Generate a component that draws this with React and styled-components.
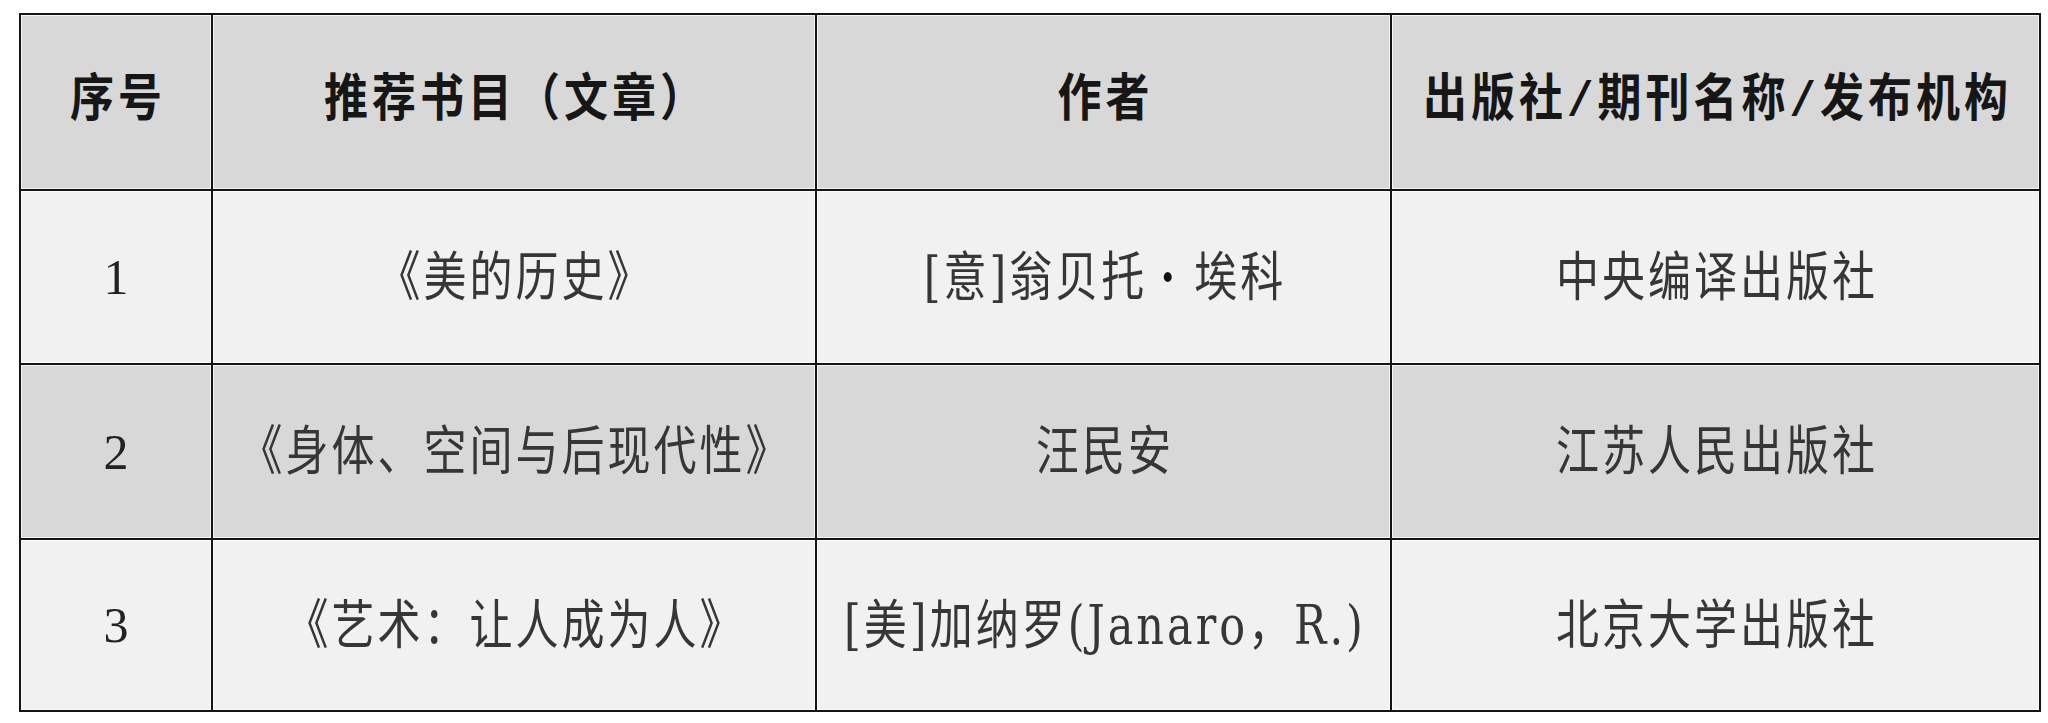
import React from "react";
import styled, { createGlobalStyle } from "styled-components";

const GlobalStyle = createGlobalStyle`
  html, body {
    margin: 0;
    padding: 0;
    background: #ffffff;
  }
  body {
    font-family: "Liberation Serif", "Noto Sans CJK SC", serif;
  }
`;

const Page = styled.div`
  padding: 13px 0 0 19px;
`;

const Table = styled.div`
  display: grid;
  grid-template-columns: 192px 604px 575px 649px;
  grid-template-rows: 176px 174px 175px 172px;
  width: max-content;
  border-left: 2px solid #141414;
  border-top: 2px solid #141414;
`;

const Cell = styled.div`
  display: flex;
  align-items: center;
  justify-content: center;
  overflow: hidden;
  border-right: 2px solid #141414;
  border-bottom: 2px solid #141414;
  background: ${(p) => (p.$shade ? "#d8d8d8" : "#f1f1f1")};
  box-shadow: inset 0 0 0 1px rgba(255, 255, 255, 0.75);
`;

const HeadText = styled.span`
  display: inline-block;
  font-family: "Liberation Mono", "Noto Sans CJK SC", sans-serif;
  font-weight: 700;
  font-size: 44px;
  line-height: 1;
  letter-spacing: 4px;
  padding-left: 4px;
  color: #161616;
  white-space: nowrap;
  transform: scaleY(1.15);
`;

const BodyText = styled.span`
  display: inline-block;
  font-family: "DejaVu Serif", "Noto Sans CJK SC", serif;
  font-weight: 400;
  font-size: 43px;
  line-height: 1;
  letter-spacing: 3px;
  padding-left: 3px;
  color: #363636;
  white-space: nowrap;
  transform: scaleY(1.25);
`;

const Num = styled.span`
  display: inline-block;
  font-family: "Liberation Serif", serif;
  font-size: 50px;
  line-height: 1;
  color: #222222;
`;

const Dot = styled.span`
  display: inline-block;
  margin: 0 16px 0 13px;
  font-weight: 700;
  color: #111111;
`;

const headers = ["序号", "推荐书目（文章）", "作者", "出版社/期刊名称/发布机构"];

const rows = [
  {
    n: "1",
    title: "《美的历史》",
    author: (
      <>
        [意]翁贝托<Dot>·</Dot>埃科
      </>
    ),
    pub: "中央编译出版社",
  },
  {
    n: "2",
    title: "《身体、空间与后现代性》",
    author: "汪民安",
    pub: "江苏人民出版社",
  },
  {
    n: "3",
    title: "《艺术：让人成为人》",
    author: "[美]加纳罗(Janaro，R.)",
    pub: "北京大学出版社",
  },
];

export default function App() {
  return (
    <>
      <GlobalStyle />
      <Page>
        <Table>
          {headers.map((h) => (
            <Cell key={h} $shade>
              <HeadText>{h}</HeadText>
            </Cell>
          ))}
          {rows.map((r, i) => {
            const shade = i % 2 === 1;
            return (
              <React.Fragment key={r.n}>
                <Cell $shade={shade}>
                  <Num>{r.n}</Num>
                </Cell>
                <Cell $shade={shade}>
                  <BodyText>{r.title}</BodyText>
                </Cell>
                <Cell $shade={shade}>
                  <BodyText>{r.author}</BodyText>
                </Cell>
                <Cell $shade={shade}>
                  <BodyText>{r.pub}</BodyText>
                </Cell>
              </React.Fragment>
            );
          })}
        </Table>
      </Page>
    </>
  );
}
